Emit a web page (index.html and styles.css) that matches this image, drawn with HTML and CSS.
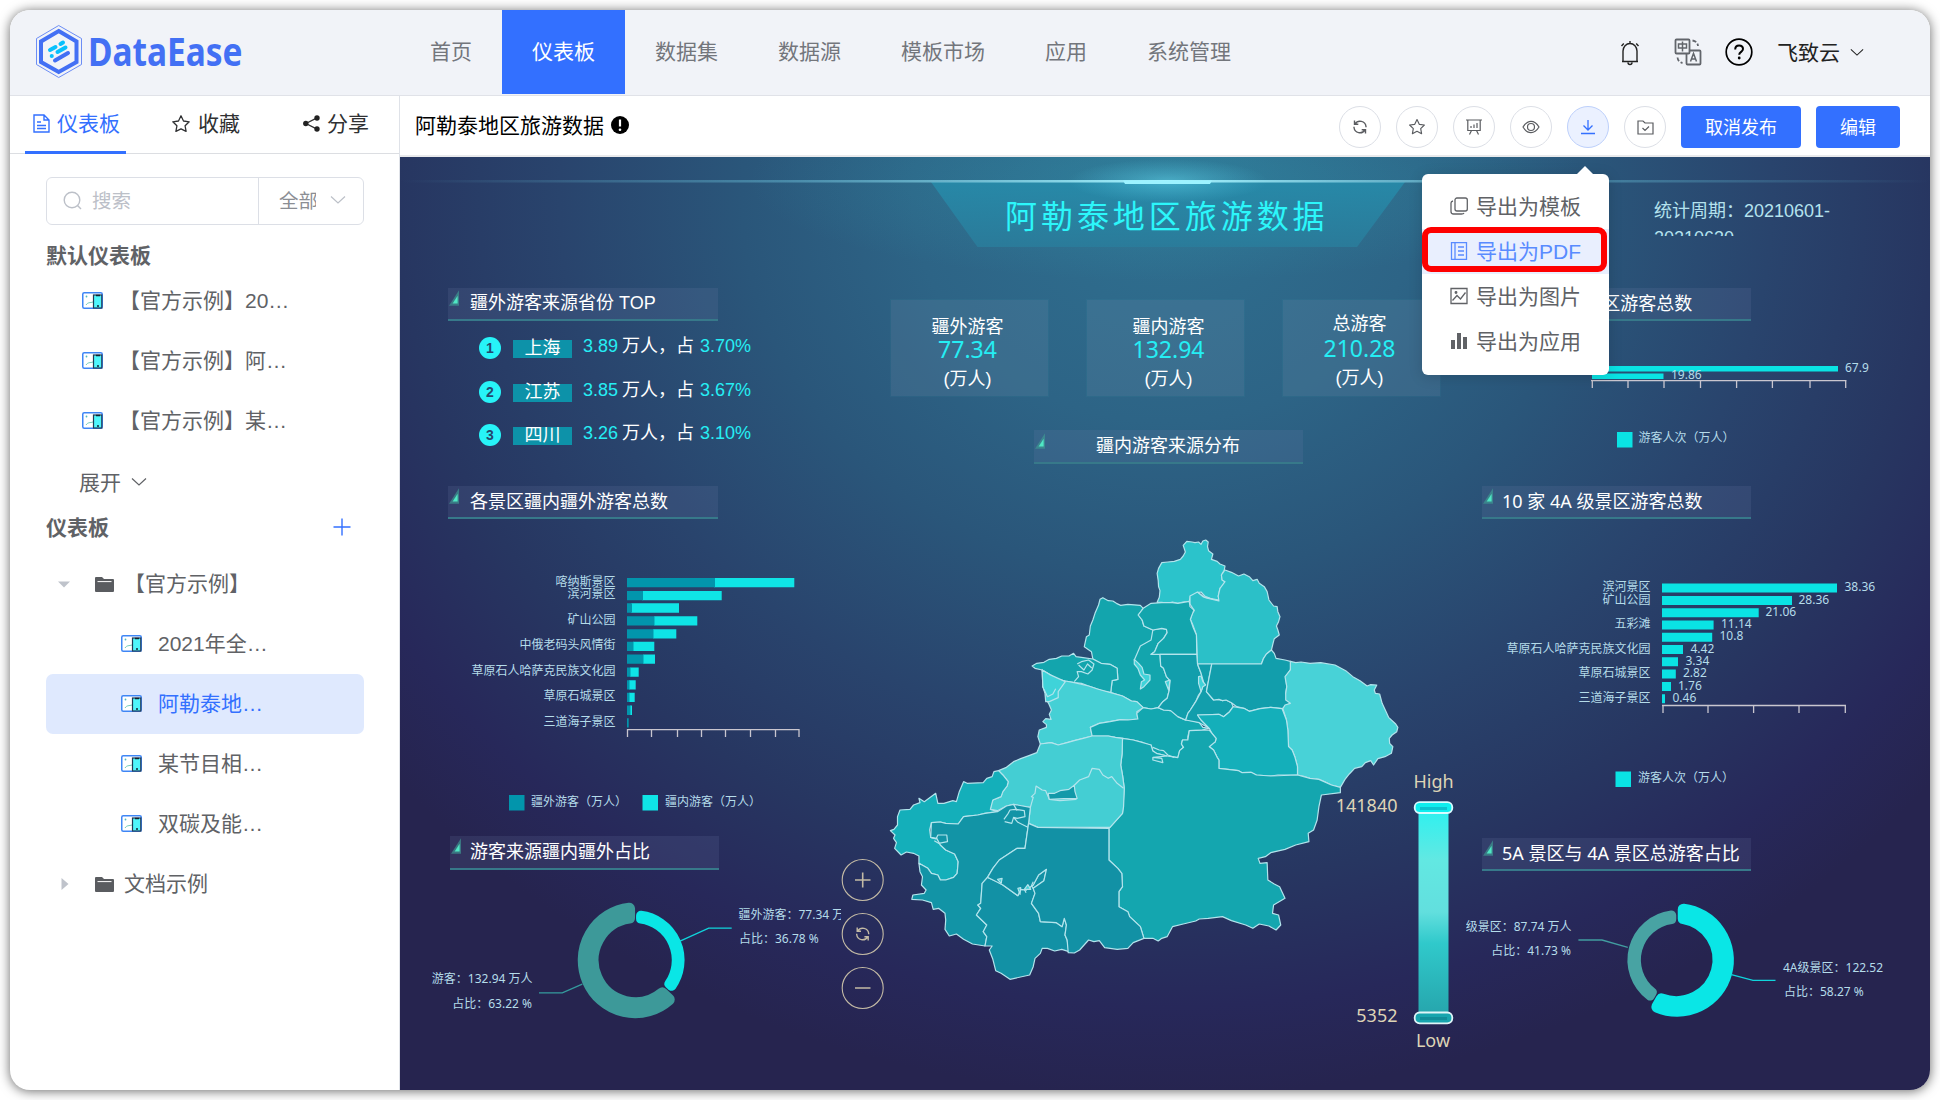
FILE: index.html
```html
<!DOCTYPE html>
<html lang="zh-CN">
<head>
<meta charset="utf-8">
<title>DataEase</title>
<link rel="stylesheet" href="styles.css">
</head>
<body>
<svg class="defs" width="0" height="0" aria-hidden="true">
  <symbol id="i-panel" viewBox="0 0 21 17"><rect x=".75" y=".75" width="19.5" height="15.5" rx="1.5" fill="#fff" stroke="#3f86f5" stroke-width="1.5"/><circle cx="4.500" cy="4.500" r=".9" fill="#5bb"/><path d="M4 13c2-3 4-2 7-3" fill="none" stroke="#6cc9b8"/><rect x="11.500" y="3" width="8.300" height="13" fill="#4ff6fb" stroke="#223a55" stroke-width="1.200"/><path d="M14 3.500h4M15 14h2" stroke="#123" stroke-width="1.600"/></symbol>
  <symbol id="i-folder" viewBox="0 0 19 15"><path d="M1 0h6l2 2h9q1 0 1 1v11q0 1-1 1H1q-1 0-1-1V1q0-1 1-1z" fill="#5a5c60"/><path d="M2.500 4.600h14" stroke="#fff" stroke-width="1"/></symbol>
  <symbol id="i-star" viewBox="0 0 20 20"><path d="M10 1.800l2.500 5.200 5.700.8-4.100 4 1 5.600-5.100-2.600-5.100 2.600 1-5.600-4.100-4 5.700-.8z" fill="none" stroke="currentColor" stroke-width="1.300" stroke-linejoin="round"/></symbol>
  <symbol id="i-down" viewBox="0 0 16 10"><path d="M1 1.500l7 6.500 7-6.500" fill="none" stroke="currentColor" stroke-width="1.200"/></symbol>
  <symbol id="i-sync" viewBox="0 0 16 16"><path d="M2.500 1.500v3.800h3.800M3 5A6 6 0 0 1 14 7.500v.8M13.500 14.500v-3.800H9.700M13 11A6 6 0 0 1 2 8.500v-.8" fill="none" stroke="currentColor" stroke-width="1.400"/></symbol>
  <symbol id="i-mark" viewBox="0 0 11 17"><path d="M11 0v17H0z" fill="#3f9b94" opacity=".65"/><path d="M9.500 6v8.500H4z" fill="#4fe8c4"/></symbol>
  <linearGradient id="beam" x1="0" x2="1" y1="0" y2="0"><stop offset="0" stop-color="#5ca8c4" stop-opacity="0"/><stop offset=".25" stop-color="#5ca8c4" stop-opacity=".6"/><stop offset=".5" stop-color="#a6f4ff"/><stop offset=".75" stop-color="#5ca8c4" stop-opacity=".6"/><stop offset="1" stop-color="#5ca8c4" stop-opacity="0"/></linearGradient>
  <linearGradient id="trap" x1="0" x2="0" y1="0" y2="1"><stop offset="0" stop-color="#268cab" stop-opacity=".85"/><stop offset="1" stop-color="#2a7c9b" stop-opacity=".9"/></linearGradient>
  <radialGradient id="glow"><stop offset="0" stop-color="#5fcfe6" stop-opacity=".55"/><stop offset="1" stop-color="#4fc0dc" stop-opacity="0"/></radialGradient>
  <radialGradient id="glow2"><stop offset="0" stop-color="#3098ad" stop-opacity=".4"/><stop offset="1" stop-color="#3098ad" stop-opacity="0"/></radialGradient>
  <linearGradient id="heat" x1="0" x2="0" y1="0" y2="1"><stop offset="0" stop-color="#2cf1f0"/><stop offset=".25" stop-color="#62e8e2"/><stop offset=".5" stop-color="#62dfde"/><stop offset=".65" stop-color="#30c9cb"/><stop offset="1" stop-color="#26a5ac"/></linearGradient>
</svg>

<div class="window">
  <header class="topbar">
    <div class="brand">
      <svg width="220" height="60" viewBox="30 22 220 60">
        <path d="M58.700 25.500L81.500 38.500v26L58.700 77.500 36.500 64.500v-26z" fill="none" stroke="#6c8df5" stroke-width="1"/>
        <path d="M58.700 31L76.500 41.500v20.500L58.700 72 41 62V41.500z" fill="none" stroke="#4370f4" stroke-width="4"/>
        <g stroke-linecap="round" stroke-width="4" fill="none"><path d="M50 50l5.500-3M60.500 44l2.500-1.500M57.500 52l8-4.500M51.700 56h.1" stroke="#08c0fc"/><path d="M55 60.500l13-7.500" stroke="#4370f4"/></g>
        <text x="88" y="65.500" class="wordmark" textLength="154.500" lengthAdjust="spacingAndGlyphs">DataEase</text>
      </svg>
    </div>
    <nav class="nav"><a>首页</a><a class="on">仪表板</a><a>数据集</a><a>数据源</a><a>模板市场</a><a>应用</a><a>系统管理</a></nav>
    <div class="tools">
      <svg width="22" height="26" viewBox="0 0 22 26" class="bell"><path d="M4 21.500V11a7 7.500 0 0 1 14 0v10.500M3 21.500h16M9 22.500q0 2 2 2t2-2M11 1v2.500M4.800 3.500L2.500 6M17.200 3.500L19.500 6" fill="none" stroke="#222" stroke-width="1.400"/></svg>
      <svg width="28" height="28" viewBox="0 0 28 28" class="lang" fill="none" stroke="#62656b" stroke-width="1.800"><rect x="1.500" y="1.500" width="14" height="14" rx="1"/><path d="M16 12.500h9.500q1 0 1 1v12q0 1-1 1h-12q-1 0-1-1V16"/><path d="M4.500 6h8v4h-8zM8.500 3.500v10" stroke-width="1.500"/><path d="M16.500 23.500l3-8 3 8M17.500 21h4" stroke-width="1.500"/><path d="M18.500 2.500q5 1 5.500 5.500M3.500 19.500q.5 4.500 5 5.500" stroke-dasharray="4 2"/></svg>
      <svg width="28" height="28" viewBox="0 0 28 28" class="help"><circle cx="14" cy="14" r="12.800" fill="none" stroke="#000" stroke-width="1.700"/><path d="M10.200 11.500q0-4 3.900-4t3.900 3.600c0 2.800-3.800 2.800-3.800 5.700" fill="none" stroke="#000" stroke-width="2"/><circle cx="14.200" cy="20" r="1.400"/></svg>
      <span class="user">飞致云</span>
      <svg width="14" height="9" class="caret"><use href="#i-down"/></svg>
    </div>
  </header>

  <div class="body">
    <aside class="side">
      <div class="tabs">
        <div class="tab on"><svg width="17" height="19" viewBox="0 0 17 19" fill="none" stroke="currentColor" stroke-width="1.400"><path d="M1 1h10l5 5v12H1zM11 1v5h5M4 8h4M4 11.500h9M4 14.500h9"/></svg><span>仪表板</span></div>
        <div class="tab t2"><svg width="20" height="20"><use href="#i-star"/></svg><span>收藏</span></div>
        <div class="tab t3"><svg width="17" height="17" viewBox="0 0 17 17"><path d="M13.500 3.200L3 8.500l10.500 5.300" fill="none" stroke="#333" stroke-width="1.300"/><g fill="#222"><circle cx="14" cy="3" r="2.700"/><circle cx="2.800" cy="8.500" r="2.700"/><circle cx="14" cy="14" r="2.700"/></g></svg><span>分享</span></div>
      </div>
      <div class="search">
        <div class="query"><svg width="20" height="20" viewBox="0 0 20 20" fill="none" stroke="#bcc0c8" stroke-width="1.400"><circle cx="9" cy="9" r="7.800"/><path d="M14.500 14.500l3.500 3.500"/></svg><span>搜索</span></div>
        <div class="scope"><span>全部</span><svg width="16" height="10"><use href="#i-down"/></svg></div>
      </div>
      <h2 class="group first">默认仪表板</h2>
      <ul class="list">
        <li><svg width="21" height="17"><use href="#i-panel"/></svg><span>【官方示例】20…</span></li>
        <li><svg width="21" height="17"><use href="#i-panel"/></svg><span>【官方示例】阿…</span></li>
        <li><svg width="21" height="17"><use href="#i-panel"/></svg><span>【官方示例】某…</span></li>
      </ul>
      <div class="more"><span>展开</span><svg width="16" height="10"><use href="#i-down"/></svg></div>
      <h2 class="group"><span>仪表板</span><svg width="18" height="18" viewBox="0 0 18 18"><path d="M9 .5v17M.5 9h17" stroke="#3370ff" stroke-width="1.400"/></svg></h2>
      <ul class="tree">
        <li class="dir"><svg width="12" height="12" viewBox="0 0 12 12"><path d="M0 3.500h12L6 9.500z" fill="#bfc3cb"/></svg><svg class="fold" width="19" height="15"><use href="#i-folder"/></svg><span class="wide">【官方示例】</span></li>
        <li class="leaf"><svg width="21" height="17"><use href="#i-panel"/></svg><span>2021年全…</span></li>
        <li class="leaf sel"><svg width="21" height="17"><use href="#i-panel"/></svg><span>阿勒泰地…</span></li>
        <li class="leaf"><svg width="21" height="17"><use href="#i-panel"/></svg><span>某节目相…</span></li>
        <li class="leaf"><svg width="21" height="17"><use href="#i-panel"/></svg><span>双碳及能…</span></li>
        <li class="dir"><svg width="12" height="12" viewBox="0 0 12 12"><path d="M3.500 0l7 6-7 6z" fill="#bfc3cb"/></svg><svg class="fold" width="19" height="15"><use href="#i-folder"/></svg><span>文档示例</span></li>
      </ul>
    </aside>

    <main class="main">
      <div class="actions">
        <h1>阿勒泰地区旅游数据</h1>
        <svg class="info" width="18" height="18" viewBox="0 0 18 18"><circle cx="9" cy="9" r="9"/><path d="M9 3.500v7" stroke="#fff" stroke-width="2.200"/><circle cx="9" cy="13.700" r="1.300" fill="#fff"/></svg>
        <div class="btns">
          <button class="rnd"><svg width="16" height="16"><use href="#i-sync"/></svg></button>
          <button class="rnd"><svg width="18" height="18"><use href="#i-star"/></svg></button>
          <button class="rnd"><svg width="16" height="16" viewBox="0 0 16 16" fill="none" stroke="currentColor" stroke-width="1.200"><path d="M0 1h16M1.800 1v10.500h12.400V1M5.500 11.500L3.500 15.500M10.500 11.500l2 4M5 9V7M8 9V5.500M11 9V4"/></svg></button>
          <button class="rnd"><svg width="18" height="14" viewBox="0 0 18 14" fill="none" stroke="currentColor" stroke-width="1.200"><path d="M1 7Q4.500 1.300 9 1.300T17 7Q13.500 12.700 9 12.700T1 7z"/><circle cx="9" cy="7" r="3.500"/></svg></button>
          <button class="rnd hot"><svg width="16" height="16" viewBox="0 0 16 16" fill="none" stroke="currentColor" stroke-width="1.300"><path d="M8 1v10M3.500 6.500L8 11l4.500-4.500M1 14.500h14"/></svg></button>
          <button class="rnd"><svg width="17" height="15" viewBox="0 0 17 15" fill="none" stroke="currentColor" stroke-width="1.200"><path d="M1 1h5l2 2h8v11H1zM5.500 8l2.500 2.500 4-4"/></svg></button>
          <button class="pri">取消发布</button>
          <button class="pri sm">编辑</button>
        </div>
        <div class="menu">
          <div class="mi"><svg width="18" height="18" viewBox="0 0 18 18" fill="none" stroke="currentColor" stroke-width="1.300"><rect x="5" y="1" width="12.300" height="13" rx="2"/><path d="M3 4q-2 .5-2 2v8.500q0 2.500 2.500 2.500h8q2 0 2.500-1"/></svg><span>导出为模板</span></div>
          <div class="mi hover"><svg width="18" height="18" viewBox="0 0 18 18" fill="none" stroke="currentColor" stroke-width="1.300"><path d="M1.500 .700h15v16.600h-15zM5 .700v16.600M8 5h6M8 9h6M8 13h6"/></svg><span>导出为PDF</span></div>
          <div class="mi"><svg width="18" height="18" viewBox="0 0 18 18" fill="none" stroke="currentColor" stroke-width="1.300"><path d="M1 1.500h16v15H1zM2.500 13.500l4.500-5 3.500 3.500 5-6.500"/><circle cx="6" cy="5.500" r=".8" fill="currentColor"/></svg><span>导出为图片</span></div>
          <div class="mi"><svg width="18" height="18" viewBox="0 0 18 18"><path d="M1 8h4v9H1zM7 1h4v16H7zM13 5h4v12h-4z" fill="currentColor"/></svg><span>导出为应用</span></div>
        </div>
      </div>

      <section class="board">
        <svg class="banner" viewBox="400 157 1530 150" width="1530" height="150">
          <ellipse cx="1168" cy="181" rx="420" ry="100" fill="url(#glow2)"/>
          <path d="M931 182H1405L1357 247H977.500z" fill="url(#trap)"/>
          <ellipse cx="1168" cy="181" rx="100" ry="22" fill="url(#glow)"/>
          <rect x="400" y="180" width="1530" height="2.500" fill="url(#beam)"/>
          <path d="M1123 180.500H1212L1210 184H1125z" fill="#9df3ff"/>
        </svg>
        <div class="title">阿勒泰地区旅游数据</div>
        <div class="period">统计周期：20210601-<br>20210630</div>

        <div class="col left">
          <h3 class="cap"><svg width="10" height="16"><use href="#i-mark"/></svg>疆外游客来源省份 TOP</h3>
          <ol class="rank">
            <li><i>1</i><b>上海</b><em>3.89</em><span>万人，占</span><em class="pct">3.70%</em></li>
            <li><i>2</i><b>江苏</b><em>3.85</em><span>万人，占</span><em class="pct">3.67%</em></li>
            <li><i>3</i><b>四川</b><em>3.26</em><span>万人，占</span><em class="pct">3.10%</em></li>
          </ol>
          <h3 class="cap low"><svg width="10" height="16"><use href="#i-mark"/></svg>各景区疆内疆外游客总数</h3>
          <svg class="chart" viewBox="400 519 441 317" width="441" height="317">
            <g transform="translate(0 -17.500) scale(1 1.033)">
            <g fill="#0fe4e6"><path d="M714 576.500h80.300v9H714zM642 589h79.700v9H642zM631 601h48v9h-48zM654 613.500h43.300v9H654zM653 626h23.300v9H653zM633 638.200h21.300v9H633zM643 650.500h12v9h-12zM630 663h8.700v9H630zM629 675.500h6.700v9H629zM629 687.500h5.700v9H629zM630 700h2v9h-2z"/></g>
            <g fill="#0295ac"><path d="M627 576.500h88v9h-88zM627 589h16v9h-16zM627 601h5v9h-5zM627 613.500h27.500v9H627zM627 626h26.500v9H627zM627 638.200h6.500v9H627zM627 650.500h16.500v9H627zM627 663h3.500v9H627zM627 675.500h2.500v9H627zM627 687.500h2.500v9H627zM627 700h3.500v9H627zM627 712.200h1.700v9H627z"/></g>
            </g>
            <path class="axis" d="M627 729.700H799.500M627.500 729v8M651.500 729v8M677.500 729v8M701.500 729v8M725.500 729v8M750.500 729v8M775.500 729v8M799 729v8"/>
            <g class="lb end" transform="translate(0 4)"><text x="615.500" y="581.700">喀纳斯景区</text><text x="615.500" y="594">滨河景区</text><text x="615.500" y="620">矿山公园</text><text x="615.500" y="645">中俄老码头风情街</text><text x="615.500" y="671">草原石人哈萨克民族文化园</text><text x="615.500" y="696">草原石城景区</text><text x="615.500" y="722">三道海子景区</text></g>
            <rect x="509" y="795" width="15.500" height="15.500" fill="#0295ac"/><rect x="642.500" y="795" width="15.500" height="15.500" fill="#0fe4e6"/>
            <g class="lb"><text x="531" y="806.300">疆外游客（万人）</text><text x="665" y="806.300">疆内游客（万人）</text></g>
          </svg>
          <h3 class="cap c3"><svg width="10" height="16"><use href="#i-mark"/></svg>游客来源疆内疆外占比</h3>
          <svg class="chart" viewBox="400 870 441 220" width="441" height="220">
            <g transform="translate(635.300 960.200) scale(1.010 1.020)" stroke-linejoin="round">
              <path d="M33.300 38.500A51 51 0 1 1-6-50.600L-6-41.600A42 42 0 1 0 26.700 32.400z" fill="#3d9999" stroke="#3d9999" stroke-width="11.500"/>
              <path d="M5.500-43.700A44 44 0 0 1 36 25.300L33.600 23.200A41 41 0 0 0 5.500-40.700z" fill="#0ae6e6" stroke="#0ae6e6" stroke-width="9.500"/>
            </g>
            <path d="M680 941.200L708.700 928.100H731.700" fill="none" stroke="#10d5dc" stroke-width="1.300"/><path d="M582.300 984.200L562.300 992.800H539" fill="none" stroke="#359a9d" stroke-width="1.300"/>
            <g class="lb" transform="translate(0 4.300)"><text x="738.500" y="914.500">疆外游客：77.34 万人</text><text x="739" y="938.500">占比：36.78 %</text></g>
            <g class="lb end" transform="translate(0 4.300)"><text x="532.500" y="979">游客：132.94 万人</text><text x="532" y="1003.500">占比：63.22 %</text></g>
          </svg>
        </div>

        <div class="col mid">
          <div class="kpis">
            <div class="kpi"><span>疆外游客</span><strong>77.34</strong><span class="u">(万人)</span></div>
            <div class="kpi k2"><span>疆内游客</span><strong>132.94</strong><span class="u">(万人)</span></div>
            <div class="kpi k3"><span>总游客</span><strong>210.28</strong><span class="u">(万人)</span></div>
          </div>
          <h3 class="cap center"><svg width="10" height="16"><use href="#i-mark"/></svg>疆内游客来源分布</h3>
          <svg class="chart" viewBox="841 464 625 626" width="625" height="626">
            <g transform="translate(860 520) scale(.35714 .33333)" class="map">
              <path fill="#2bc3cb" d="M832 247L838 232 840 212 836 200 835 182 832 160 836 145 845 128 862 126 880 124 897 118 905 108 911 96 905 76 915 64 930 66 938 68 948 66 955 73 960 63 968 60 975 66 973 80 976 92 988 102 984 118 1000 124 1008 132 1022 138 1020 150 1012 165 1014 180 1022 185 1015 200 1008 205 1003 230 1010 234 1000 243 980 235 965 228 955 216 945 218 940 224 925 228 922 244 905 246 890 250 875 246 860 250 845 247z"/>
              <path fill="#2bc0c8" d="M1022 150L1040 157 1060 168 1075 162 1090 170 1100 182 1112 178 1118 190 1132 200 1140 215 1145 240 1158 258 1168 260 1170 275 1176 290 1172 305 1166 318 1170 330 1174 345 1160 356 1157 368 1152 390 1138 402 1130 415 1124 432 945 432 943 380 942 345 932 315 925 298 930 280 936 272 924 252 924 228 945 216 960 230 975 235 1005 243 1003 228 1008 205 1022 185 1014 180 1012 165z"/>
              <path fill="#13a5ad" d="M680 233L695 242 708 243 718 250 730 256 750 253 785 256 793 265 779 285 790 300 795 318 820 330 845 325 858 328 860 338 850 355 835 370 825 395 815 403 840 403 842 438 850 445 858 470 868 482 866 510 860 535 848 545 835 563 815 567 793 563 775 545 760 543 735 528 702 518 706 482 722 478 720 445 700 433 675 430 652 417 648 395 628 380 634 350 642 345 645 318 652 300 658 280 668 255 672 238z"/>
              <path fill="#13a5ad" d="M793 265L815 250 845 248 875 248 890 250 922 244 924 260 935 270 925 298 932 320 942 345 943 403 815 403 825 395 835 370 850 355 860 338 858 328 845 325 820 330 795 318 790 300 779 285z"/>
              <path fill="#13a5ad" d="M482 438L495 430 515 427 530 418 550 415 565 408 585 408 598 400 605 410 620 412 652 417 675 430 700 433 720 445 722 478 706 482 702 518 680 513 665 507 640 498 620 490 600 488 575 483 550 477 530 463 510 450 490 445z"/>
              <path fill="#45d0d5" d="M510 450L530 463 550 477 575 483 600 488 640 498 665 507 702 518 735 528 760 543 775 545 793 563 775 575 778 597 750 600 730 599 700 605 670 610 645 622 650 648 625 655 600 662 580 668 555 675 535 668 505 672 498 650 502 630 522 622 522 614 512 605 520 596 535 598 530 583 536 570 528 550 520 535 520 520 512 500z"/>
              <path fill="#13a7b0" d="M645 622L670 610 700 605 730 599 750 600 778 597 775 580 793 563 815 567 835 563 850 570 870 572 890 590 910 600 935 603 950 608 960 622 978 625 958 630 922 632 918 650 918 660 903 660 900 672 906 682 895 692 890 713 860 708 830 700 820 693 815 675 800 672 790 667 765 660 735 655 715 652 695 648 650 648z"/>
              <path fill="#129eac" d="M840 403H943L945 432 955 460 963 490 955 515 948 525 940 545 925 570 918 580 912 600 890 590 870 572 850 570 835 563 848 545 860 535 866 510 868 482 858 470 850 445 842 438z"/>
              <path fill="#129eac" d="M945 432H985L978 470 970 515 990 540 1005 538 1015 542 1025 540 1040 548 1045 560 1035 575 1018 590 1005 583 945 585 955 600 978 625 950 608 912 600 918 580 925 570 940 545 955 515 963 490 955 460z"/>
              <path fill="#129eac" d="M985 432H1124L1130 415 1138 402 1152 390 1160 400 1165 415 1190 420 1208 425 1205 450 1192 470 1195 500 1192 520 1205 550 1195 556 1182 566 1150 562 1120 566 1090 574 1075 565 1055 560 1040 548 1025 540 1015 542 1005 538 990 540 970 515 978 470z"/>
              <path fill="#48d2d7" d="M1205 424L1220 428 1235 426 1260 430 1290 428 1330 435 1360 452 1380 470 1400 482 1420 498 1430 494 1447 495 1440 510 1443 520 1455 522 1462 550 1475 580 1480 592 1500 612 1506 622 1503 635 1490 645 1482 655 1483 670 1492 680 1488 700 1470 710 1450 716 1438 735 1430 722 1415 728 1405 740 1385 745 1370 762 1358 778 1345 802 1320 795 1300 785 1285 778 1260 775 1240 768 1225 765 1225 740 1218 712 1210 690 1200 680 1198 630 1194 600 1184 566 1190 555 1205 550 1192 540 1192 520 1195 500 1190 470 1205 450z"/>
              <path fill="#14afba" d="M1045 560L1075 565 1090 574 1120 566 1150 562 1182 566 1194 600 1198 630 1200 680 1210 690 1218 712 1225 740 1225 765 1170 765 1150 768 1110 765 1095 757 1070 758 1060 752 1005 745 1005 720 1000 712 990 690 978 680 985 670 995 665 997 655 985 640 978 625 955 600 945 585 1005 583 1018 590 1035 575z"/>
              <path fill="#14a6af" d="M735 655L765 660 790 667 815 675 820 693 830 700 860 708 890 713 895 692 906 682 900 672 903 660 918 660 922 632 978 630 997 655 995 665 978 680 990 690 1000 712 1005 720 1005 745 1060 752 1070 758 1095 757 1110 765 1150 768 1225 765 1260 775 1285 778 1320 795 1345 802 1345 818 1292 825 1285 860 1280 900 1270 930 1255 940 1257 965 1220 975 1190 988 1150 998 1135 1010 1115 1015 1120 1030 1140 1028 1142 1080 1160 1092 1175 1100 1190 1135 1158 1155 1155 1180 1172 1185 1178 1215 1165 1230 1145 1218 1118 1212 1100 1225 1080 1215 1040 1202 1015 1190 975 1195 950 1197 940 1203 905 1212 875 1220 860 1250 845 1255 835 1263 820 1255 795 1255 785 1220 755 1190 750 1175 725 1160 725 1115 735 1100 733 1060 722 1045 697 1020 697 925 735 880 740 805 735 765 730 735 734 700z"/>
              <path fill="#44ced3" d="M505 672L535 668 555 675 580 668 600 662 625 655 650 648 695 648 715 652 735 655 734 700 730 735 735 765 740 805 738 860 735 880 700 922 498 922 472 910 477 862 450 858 430 853 410 858 385 872 365 868 368 850 372 840 395 830 400 815 412 798 415 785 400 765 388 752 410 742 430 725 450 716 475 706 495 698z"/>
              <path fill="#14afba" d="M388 752L400 765 415 785 412 798 400 815 395 830 372 840 365 868 385 875 350 880 330 885 290 890 275 912 240 910 225 906 200 908 195 930 198 952 215 955 225 975 240 990 265 1002 275 1025 272 1060 262 1072 240 1080 225 1080 218 1065 200 1060 190 1045 165 1030 165 1008 150 1000 130 996 115 1005 97 985 102 968 94 955 98 945 85 932 95 928 105 915 105 890 112 870 140 868 150 855 168 848 165 835 180 845 212 820 218 850 235 850 260 842 270 845 278 815 290 785 300 790 345 788 355 775 370 770 375 755z"/>
              <path fill="#1294a6" d="M200 908L225 906 240 910 275 912 290 890 330 885 350 880 385 875 410 858 430 853 477 862 472 910 468 940 462 985 440 985 425 995 390 1020 372 1045 357 1072 342 1090 338 1150 330 1155 338 1165 326 1185 345 1205 355 1215 345 1235 355 1250 350 1278 315 1272 290 1258 270 1242 250 1248 238 1228 240 1200 238 1180 220 1165 205 1168 200 1148 175 1140 145 1138 148 1125 180 1120 185 1110 172 1095 175 1070 168 1055 165 1030 190 1045 200 1060 218 1065 225 1080 240 1080 262 1072 272 1060 275 1025 265 1002 240 990 225 975 215 955 198 952z"/>
              <path fill="#1291a5" d="M357 1072L385 1085 400 1095 442 1127 450 1108 465 1110 485 1095 500 1065 522 1048 515 1082 485 1105 490 1120 480 1150 500 1180 505 1205 535 1207 550 1208 566 1220 572 1195 578 1215 574 1245 580 1260 585 1295 565 1288 545 1293 525 1285 510 1285 505 1300 490 1315 485 1340 475 1365 420 1378 395 1360 380 1352 372 1318 362 1290 370 1278 350 1278 355 1250 345 1235 355 1215 326 1185 338 1165 330 1155 338 1150 342 1090z"/>
              <path fill="#1291a5" d="M472 910L498 922 697 925 697 1020 722 1045 733 1060 735 1100 725 1115 725 1160 750 1175 755 1190 785 1220 795 1255 765 1268 750 1285 720 1288 685 1283 670 1262 655 1265 640 1260 615 1290 600 1299 583 1298 580 1260 574 1245 578 1215 572 1195 566 1220 550 1208 505 1205 500 1180 480 1150 490 1120 485 1105 515 1082 522 1048 500 1065 485 1095 465 1110 450 1108 442 1127 400 1095 357 1072 372 1045 390 1020 440 985 462 985z"/>
              <path fill="none" d="M477 862L485 832 480 830 490 820 493 798 510 810 520 812 530 838 560 842 605 838 598 798 615 780 640 770 650 745 670 748 680 765 695 775 705 770 720 790 738 805M820 330L815 360 785 378 772 410 768 420 790 460M510 500L530 505M945 216L965 232 1005 240"/>
              <path fill="#1299a9" d="M527 820L545 820 560 812 585 808 600 796 602 815 608 835 570 836 530 838z"/>
              <path fill="#3fd3d9" d="M768 418L780 430 790 442 795 462 812 465 812 480 795 500 785 507 788 485 797 480 785 465 778 445 768 432zM855 485L868 480 864 510zM948 470L955 468 960 485 968 495 960 500 955 515 948 490zM510 450L530 463 575 485 555 515 555 533 530 545 520 545 518 520 512 500zM385 1078L398 1075 395 1090zM442 1105l8-2-2 20zM460 1108l10-14 8 14z"/>
              <path fill="none" d="M608 432L620 425 640 420 655 432 650 450 638 462 620 455 608 455 612 470 600 485M612 435l15 15 10-18 12 12M515 508l10 22 15-8 8-16M403 898L415 880 420 870 435 868 460 872 462 890 440 895 430 892 425 910 405 905M430 853L440 872M430 892l12 15 28 15M198 952l15 5 5-12 25 0 2 20-25 5-12-8M820 682L838 690 850 692 862 705 880 712M820 712L845 715 848 728 820 720zM860 708L820 712M485 1105l-5-8 5-12M460 1108l5 10"/>
            </g>
            <g class="zoom"><circle cx="862.700" cy="880" r="20.500"/><circle cx="862.700" cy="934" r="20.500"/><circle cx="862.700" cy="988" r="20.500"/><path d="M855 880h15.500M862.700 872.500v15M855 988h15.500" stroke-width="1.600"/></g>
            <svg x="854.700" y="926" width="16" height="16" color="#c3baa5"><use href="#i-sync"/></svg>
            <rect x="1418.500" y="808" width="30" height="208" fill="url(#heat)"/>
            <rect x="1414.700" y="802.200" width="37.600" height="10.800" rx="5" fill="#0eeeee" stroke="#d8fbff" stroke-width="1.800"/><path d="M1420 808.500h27" stroke="#0bc3cf" stroke-width="3"/>
            <rect x="1414.700" y="1012.500" width="37.600" height="10.800" rx="5" fill="#17a5ae" stroke="#dff5f8" stroke-width="1.800"/><path d="M1420 1018.500h27" stroke="#118d99" stroke-width="3"/>
            <g class="hl"><text x="1433.500" y="788" text-anchor="middle">High</text><text x="1433" y="1047" text-anchor="middle">Low</text><text x="1397.500" y="812.300" text-anchor="end">141840</text><text x="1397.500" y="1022.300" text-anchor="end">5352</text></g>
          </svg>
        </div>

        <div class="col right">
          <h3 class="cap"><svg width="10" height="16"><use href="#i-mark"/></svg>5 家 5A 级景区游客总数</h3>
          <svg class="chart" viewBox="1466 321 464 165" width="464" height="165">
            <path d="M1592 366h246v5.500h-246zM1592 373.500h71.500v5.500h-71.500z" fill="#0ae3e4"/>
            <path class="axis" d="M1591 380.700H1846.500M1592.300 380v8M1628 380v8M1664 380v8M1700.500 380v8M1736.600 380v8M1772.400 380v8M1810 380v8M1845.700 380v8"/>
            <rect x="1617" y="432" width="15.500" height="15.500" fill="#0ae3e4"/>
            <g class="lb"><text x="1845" y="372">67.9</text><text x="1671" y="379">19.86</text><text x="1638.500" y="442">游客人次（万人）</text></g>
          </svg>
          <h3 class="cap"><svg width="10" height="16"><use href="#i-mark"/></svg>10 家 4A 级景区游客总数</h3>
          <svg class="chart" viewBox="1466 519 464 319" width="464" height="319">
            <path d="M1662 583.500h175v9h-175zM1662 596h130v9h-130zM1662 608.200h96.700v9H1662zM1662 620.500h51.600v9H1662zM1662 632.800h50.200v9H1662zM1662 645h21v9h-21zM1662 657.300h16v9h-16zM1662 669.600h13.800v9H1662zM1662 682h9v9h-9zM1662 694.300h3v9h-3z" fill="#0ae3e4"/>
            <path class="axis" d="M1662 705.500H1846M1663 705v8M1708 705v8M1753.600 705v8M1799 705v8M1845.300 705v8"/>
            <g class="lb end" transform="translate(0 4)"><text x="1650.500" y="587">滨河景区</text><text x="1650.500" y="600">矿山公园</text><text x="1650.500" y="624">五彩滩</text><text x="1650.500" y="649">草原石人哈萨克民族文化园</text><text x="1650.500" y="673">草原石城景区</text><text x="1650.500" y="697.500">三道海子景区</text></g>
            <g class="lb" transform="translate(0 4.300)"><text x="1844.500" y="587">38.36</text><text x="1798.500" y="600">28.36</text><text x="1765.500" y="612">21.06</text><text x="1721" y="624">11.14</text><text x="1719.500" y="636">10.8</text><text x="1690.500" y="649">4.42</text><text x="1685.500" y="661">3.34</text><text x="1683" y="673">2.82</text><text x="1678" y="686">1.76</text><text x="1672.500" y="698">0.46</text><text x="1638" y="778">游客人次（万人）</text></g>
            <rect x="1615.500" y="771.500" width="15.500" height="15.500" fill="#0ae3e4"/>
          </svg>
          <h3 class="cap"><svg width="10" height="16"><use href="#i-mark"/></svg>5A 景区与 4A 景区总游客占比</h3>
          <svg class="chart" viewBox="1466 871 464 219" width="464" height="219">
            <g transform="translate(1677 960)" stroke-linejoin="round">
              <path d="M6.500-50.600A51 51 0 1 1-19.900 46.900L-15.500 39.100A42 42 0 1 0 6.500-41.600z" fill="#0ae6e6" stroke="#0ae6e6" stroke-width="11.500"/>
              <path d="M-27 35.800A45 45 0 0 1-5.500-44.700L-5.500-40.700A41 41 0 0 0-25 32.300z" fill="#48a3a3" stroke="#48a3a3" stroke-width="9.500"/>
            </g>
            <path d="M1578.400 940H1602L1627.800 947.300" fill="none" stroke="#429da0" stroke-width="1.300"/><path d="M1731.400 974.700L1753 980.300H1775.500" fill="none" stroke="#10d5dc" stroke-width="1.300"/>
            <g class="lb end" transform="translate(0 4)"><text x="1571.500" y="926.500">5A级景区：87.74 万人</text><text x="1571" y="950.500">占比：41.73 %</text></g>
            <g class="lb" transform="translate(0 4)"><text x="1783" y="967.500">4A级景区：122.52</text><text x="1784" y="991.500">占比：58.27 %</text></g>
          </svg>
        </div>
      </section>
    </main>
  </div>
</div>
</body>
</html>
```
FILE: styles.css
```css
*, *::before, *::after { box-sizing: border-box; }
body {
  margin: 0;
  padding: 10px;
  height: 1100px;
  background: #fff;
  overflow: hidden;
  font-family: "Liberation Sans", "Noto Sans CJK SC", sans-serif;
  font-size: 21px;
  color: #606266;
}
h1, h2, h3, ul, ol { margin: 0; padding: 0; font-weight: 400; list-style: none; }
svg { display: block; flex: none; }
.defs { position: absolute; }
.window {
  display: flex;
  flex-direction: column;
  width: 1920px;
  height: 1080px;
  border-radius: 20px;
  overflow: hidden;
  background: #fff;
  box-shadow: 0 1px 12px rgba(0, 0, 0, .6);
}

/* top bar */
.topbar { display: flex; height: 86px; background: #f1f3f8; border-bottom: 1px solid #e0e2e8; }
.brand { width: 390px; padding: 12px 0 0 20px; }
.wordmark { font: 700 39px "Noto Sans", sans-serif; fill: #4370f4; }
.nav { display: flex; height: 84px; }
.nav a { padding: 0 30px; line-height: 83px; white-space: nowrap; color: #73767c; }
.nav a.on { background: #3370ff; color: #fff; }
.tools { display: flex; margin-left: auto; padding-right: 66px; height: 84px; align-items: center; color: #222; }
.bell { margin-top: 1px; }
.lang { margin-left: 33px; }
.help { margin-left: 23px; }
.user { margin-left: 24px; padding-bottom: 3px; }
.caret { margin-left: 10px; }

.body { display: flex; flex: 1; min-height: 0; }

/* sidebar */
.side { width: 390px; border-right: 1px solid #dfe2e8; }
.tabs { display: flex; height: 58px; border-bottom: 1px solid #dcdee2; color: #303133; }
.tab { display: flex; align-items: center; gap: 7px; height: 58px; padding-bottom: 3px; white-space: nowrap; }
.tab span { padding-bottom: 3px; }
.tab.on { width: 101px; margin-left: 15px; padding-left: 8px; color: #3370ff; border-bottom: 3px solid #3370ff; padding-bottom: 0; }
.tab.t2 { margin-left: 45px; }
.tab.t3 { margin-left: 63px; }
.search { display: flex; width: 318px; height: 48px; margin: 23px 0 0 36px; border: 1px solid #dcdfe6; border-radius: 6px; font-size: 19.500px; }
.query { display: flex; align-items: center; gap: 9px; width: 212px; padding-left: 16px; color: #bcc0c8; border-right: 1px solid #dcdfe6; }
.query span { padding-bottom: 3px; }
.scope { display: flex; align-items: center; padding-left: 20px; padding-bottom: 3px; color: #8b8e94; }
.scope span { width: 37px; overflow: hidden; white-space: nowrap; padding-bottom: 1px; }
.scope svg { margin-left: 14px; color: #bcc0c8; }
.group { display: flex; align-items: center; height: 42px; margin-left: 36px; font-weight: 700; font-size: 21px; }
.group span { padding-bottom: 3px; }
.group.first { margin-top: 10px; height: 43px; padding-bottom: 5px; }
.group svg { margin-left: 224px; }
.list { margin-top: -7px; }
.list li { display: flex; align-items: center; height: 60px; padding-left: 72px; }
.list li span { margin-left: 16px; padding-bottom: 4px; }
.list li svg { margin-top: -1px; }
.more { display: flex; align-items: center; height: 60px; padding-left: 69px; gap: 10px; margin-top: 1px; }
.more span { padding-bottom: 3px; }
.more + .group { margin-top: -6px; }
.tree { margin-top: 6px; }
.tree li { display: flex; align-items: center; height: 60px; margin-left: 36px; width: 318px; border-radius: 7px; }
.tree li span { padding-bottom: 4px; }
.dir { padding-left: 12px; }
.dir .fold { margin-left: 25px; }
.dir span { margin-left: 10px; }
.leaf { padding-left: 75px; }
.leaf svg { margin-top: -1px; }
.leaf span { margin-left: 16px; }
.tree .sel { background: #dfe9fe; color: #3370ff; }

/* action bar */
.main { display: flex; flex-direction: column; width: 1530px; }
.actions { position: relative; display: flex; align-items: center; height: 61px; padding: 0 30px 0 15px; border-bottom: 2px solid #e9eaec; }
.actions h1 { font-size: 21px; color: #000; padding-bottom: 3px; }
.info { margin-left: 7px; margin-bottom: 1px; }
.btns { display: flex; gap: 15px; margin-left: auto; padding-top: 3px; }
.rnd { display: flex; align-items: center; justify-content: center; width: 42px; height: 42px; padding: 0; border: 1px solid #dcdfe6; border-radius: 50%; background: #fff; color: #5a5c60; }
.rnd.hot { background: #ebf1ff; border-color: #bdd0fb; color: #3370ff; }
.pri { width: 120px; height: 42px; padding: 0 0 2px; border: 0; border-radius: 4px; background: #3370ff; color: #fff; font: inherit; font-size: 18px; }
.pri.sm { width: 84px; }

.menu { position: absolute; z-index: 5; left: 1022px; top: 78px; width: 187px; height: 201px; padding: 10px 0; background: #fff; border-radius: 6px; box-shadow: 0 2px 14px rgba(0, 0, 0, .15); }
.menu::before { content: ""; position: absolute; left: 154px; top: -8px; border: 9px solid transparent; border-top: 0; border-bottom-color: #fff; }
.mi { position: relative; display: flex; align-items: center; gap: 8px; height: 45px; padding-left: 28px; white-space: nowrap; }
.mi span { padding-bottom: 4px; }
.mi svg { margin-top: -1px; }
.mi.hover { background: #e9effe; color: #598bff; }
.mi.hover::after { content: ""; position: absolute; left: 0; top: -2px; width: 185px; height: 45px; border: 6px solid #fe0000; border-radius: 9px; }

/* dashboard */
.board {
  position: relative;
  display: grid;
  grid-template: 131px 802px / 441px 625px 464px;
  height: 933px;
  overflow: hidden;
  color: #fff;
  background: radial-gradient(1010px 900px at 766px 40px, #2f7090 0, #2d6486 25%, #2a567a 42%, #29446d 60%, #273661 76%, #27285a 90%, #26244f 100%);
}
.banner { position: absolute; left: 0; top: 0; }
.title { position: relative; grid-column: 2; padding: 31px 0 0 164px; font: 32px/52px "Noto Sans CJK SC", sans-serif; letter-spacing: 3.950px; color: #2cf6fa; white-space: nowrap; }
.period { margin: 41px 0 0 188px; width: 200px; height: 38px; overflow: hidden; font-size: 18px; line-height: 27px; color: #b4e2ee; }
.col { display: flex; flex-direction: column; min-width: 0; }
.left { grid-column: 1; grid-row: 2; }
.mid { grid-column: 2; grid-row: 2; }
.right { grid-column: 3; grid-row: 2; }
.cap { display: flex; flex: none; width: 270px; height: 33px; margin-left: 48px; padding: 2px 0 0 1px; line-height: 26px; font-size: 18px; white-space: nowrap; background: rgba(120, 130, 175, .16); border-bottom: 2px solid #37798a; }
.cap svg { margin-right: 11px; }
.cap.low { line-height: 28px; }
.cap.c3 { margin-left: 50px; width: 269px; height: 34px; line-height: 28px; }
.cap.c3 svg { margin-right: 9px; }
.right .cap { margin-left: 16px; width: 269px; font-family: "Noto Sans", "Noto Sans CJK SC", sans-serif; }
.right .cap svg { margin-right: 9px; }
.chart { overflow: hidden; }

.rank { height: 165px; padding: 7px 0 0 79px; font-size: 18px; }
.rank li { display: flex; height: 43.500px; align-items: flex-start; line-height: 36px; white-space: nowrap; }
.rank i { width: 22px; height: 22px; margin-top: 9px; border-radius: 50%; background: #27f3f8; color: #24486e; font: 700 14px/22px "Liberation Sans", sans-serif; text-align: center; }
.rank b { width: 59px; height: 18px; margin: 12px 11px 0 12px; background: #0d92a9; font-weight: 400; line-height: 16px; text-align: center; }
.rank em { width: 39px; font-style: normal; color: #25eef4; }
.rank span { width: 78px; }

.kpis { display: flex; gap: 39px; margin: 12px 0 0 50px; }
.kpi { display: flex; flex-direction: column; align-items: center; width: 157px; height: 96px; padding: 15px 4px 0 0; background: rgba(120, 150, 180, .18); font-size: 18px; line-height: 24px; outline: 1px solid rgba(60, 170, 180, .08); }
.kpi strong { font: 400 23px/20px "Noto Sans", sans-serif; color: #25eef4; }
.kpi .u { line-height: 41px; }
.k2 { padding: 15px 0 0 6px; }
.k3 { padding-top: 12px; }
.k3 strong { margin-top: 2px; }
.cap.center { width: 269px; height: 34px; margin: 34px 0 0 193px; padding-top: 3px; }
.cap.center svg { margin-right: 51px; }

.axis { fill: none; stroke: #c9c6cf; stroke-width: 1.300; }
.lb { font: 12px "Noto Sans", "Noto Sans CJK SC", sans-serif; fill: #b5dcea; }
.end { text-anchor: end; }
.hl { font: 18px "Noto Sans", sans-serif; fill: #ded4b6; }
.map path { stroke: #b3e4ec; stroke-width: 1.200; stroke-linejoin: round; vector-effect: non-scaling-stroke; }
.zoom { fill: none; stroke: #c3baa5; stroke-width: 1.100; }
```
